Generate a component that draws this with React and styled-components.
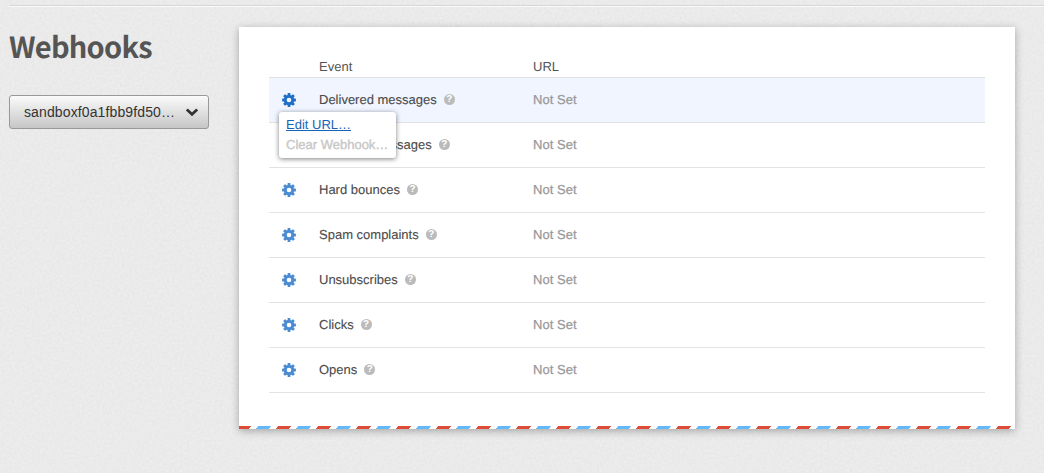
import React from 'react';
import styled, { createGlobalStyle } from 'styled-components';

const GlobalStyle = createGlobalStyle`
  * { box-sizing: border-box; }
  html, body { margin: 0; height: 100%; overflow: hidden; }
  body {
    background: #ebebeb;
    font-family: "Liberation Sans", Arial, sans-serif;
    font-size: 13px;
    color: #444;
    text-rendering: geometricPrecision;
  }
`;

const Page = styled.div`
  position: relative;
  isolation: isolate;
  height: 473px;
  padding: 5px 0 0 9px;
  overflow: hidden;
`;

const Paper = styled.svg`
  position: absolute;
  inset: 0;
  width: 100%;
  height: 100%;
  z-index: -1;
`;

const Divider = styled.div`
  height: 2px;
  background: #d6d6d6;
  border-bottom: 1px solid #fbfbfb;
`;

const Columns = styled.div`
  display: flex;
  align-items: flex-start;
`;

const Sidebar = styled.aside`
  width: 230px;
  padding-top: 19px;
`;

const Title = styled.h1`
  margin: 0 0 29px;
  font: 700 29px/40px "Noto Sans CJK SC", "Noto Sans", sans-serif;
  letter-spacing: -0.75px;
  color: #555;
`;

const Select = styled.button`
  display: flex;
  align-items: center;
  justify-content: space-between;
  width: 200px;
  height: 34px;
  padding: 0 9px 0 14px;
  border: 1px solid #999;
  border-radius: 3px;
  background: linear-gradient(#fbfbfb, #c6c6c6);
  font: 14px "Liberation Sans", Arial, sans-serif;
  letter-spacing: 0.12px;
  color: #333;
`;

const Card = styled.main`
  width: 776px;
  height: 402px;
  margin-top: 20px;
  padding: 30px 30px 0;
  display: flex;
  flex-direction: column;
  background: #fff;
  box-shadow: 0 2px 8px rgba(0, 0, 0, 0.3);
`;

const Row = styled.div`
  display: grid;
  grid-template-columns: 50px 214px 1fr;
  align-items: center;
  height: ${(p) => (p.$head ? 21 : 45)}px;
  padding-bottom: ${(p) => (p.$head ? 2 : 1)}px;
  border-bottom: 1px solid #e2e2e2;
  background: ${(p) => (p.$active ? '#f0f5ff' : 'transparent')};
  color: ${(p) => (p.$head ? '#555' : '#4a4a4a')};
`;

const GearCell = styled.div`
  position: relative;
  display: flex;
  padding: 1px 0 0 13px;
  color: ${(p) => (p.$active ? '#1f6fc5' : '#4a8bd2')};
`;

const EventName = styled.div`
  display: flex;
  align-items: center;
  gap: 7px;
  -webkit-text-stroke: 0.1px #4a4a4a;
`;

const UrlValue = styled.div`
  color: #999;
  letter-spacing: 0.05px;
  -webkit-text-stroke: 0.25px #999;
`;

const Menu = styled.div`
  position: absolute;
  top: 20px;
  left: 10px;
  z-index: 1;
  width: 117px;
  height: 46px;
  padding: 3px 7px;
  border-radius: 3px;
  background: #fff;
  box-shadow: 0 1px 5px rgba(0, 0, 0, 0.5);
`;

const MenuItem = styled.div`
  line-height: 20px;
  white-space: nowrap;
  color: ${(p) => (p.$disabled ? '#c8c8c8' : '#1763b6')};
  text-decoration: ${(p) => (p.$disabled ? 'none' : 'underline')};
  -webkit-text-stroke: ${(p) => (p.$disabled ? '0.4px #c8c8c8' : '0')};
`;

const AirmailEdge = styled.div`
  height: 3px;
  margin: auto -30px 0;
  overflow: hidden;
  &::before {
    content: '';
    display: block;
    height: 3px;
    margin: 0 -4px;
    transform: skewX(-40deg);
    background: repeating-linear-gradient(
      90deg,
      #df4b37 0 13px, #fff 13px 20px,
      #65b8fc 20px 33px, #fff 33px 40px
    );
    background-position: 2px 0;
  }
`;

const Gear = () => (
  <svg width="14" height="14" viewBox="-7 -7 14 14" fill="currentColor">
    <mask id="gear-hole" maskUnits="userSpaceOnUse" x="-8" y="-8" width="16" height="16">
      <rect x="-8" y="-8" width="16" height="16" fill="#fff" />
      <circle r="2.3" fill="#000" />
    </mask>
    <g mask="url(#gear-hole)">
      {[0, 45, 90, 135].map((a) => (
        <rect key={a} x="-1.4" y="-6.9" width="2.8" height="13.8" rx="0.5" transform={`rotate(${a})`} />
      ))}
      <circle r="5.2" />
    </g>
  </svg>
);

const HelpBadge = styled.span`
  display: flex;
  align-items: center;
  justify-content: center;
  width: 11px;
  height: 11px;
  border-radius: 50%;
  background: #bbb;
  color: #fff;
  font-size: 10px;
  font-weight: bold;
  line-height: 11px;
  -webkit-text-stroke: 0;
`;

const Chevron = () => (
  <svg width="14" height="10" viewBox="0 0 14 10" fill="none" stroke="#333" strokeWidth="2.7">
    <path d="M1.8 2.4 7 7.3 12.2 2.4" />
  </svg>
);

const events = [
  'Delivered messages',
  'Dropped messages',
  'Hard bounces',
  'Spam complaints',
  'Unsubscribes',
  'Clicks',
  'Opens',
];

export default function App() {
  return (
    <Page>
      <GlobalStyle />
      <Paper aria-hidden="true">
        <filter id="paper" x="0" y="0" width="100%" height="100%" colorInterpolationFilters="sRGB">
          <feTurbulence type="fractalNoise" baseFrequency="0.4" numOctaves="2" />
          <feColorMatrix values="0.045 0 0 0 0.896  0.045 0 0 0 0.896  0.045 0 0 0 0.896  0 0 0 0 1" />
        </filter>
        <rect width="100%" height="100%" filter="url(#paper)" />
      </Paper>
      <Divider />
      <Columns>
        <Sidebar>
          <Title>Webhooks</Title>
          <Select>
            sandboxf0a1fbb9fd50…
            <Chevron />
          </Select>
        </Sidebar>
        <Card>
          <Row $head>
            <span />
            <span>Event</span>
            <span>URL</span>
          </Row>
          {events.map((name, i) => (
            <Row key={name} $active={i === 0}>
              <GearCell $active={i === 0}>
                <Gear />
                {i === 0 && (
                  <Menu>
                    <MenuItem>Edit URL…</MenuItem>
                    <MenuItem $disabled>Clear Webhook…</MenuItem>
                  </Menu>
                )}
              </GearCell>
              <EventName>
                {name}
                <HelpBadge>?</HelpBadge>
              </EventName>
              <UrlValue>Not Set</UrlValue>
            </Row>
          ))}
          <AirmailEdge />
        </Card>
      </Columns>
    </Page>
  );
}
